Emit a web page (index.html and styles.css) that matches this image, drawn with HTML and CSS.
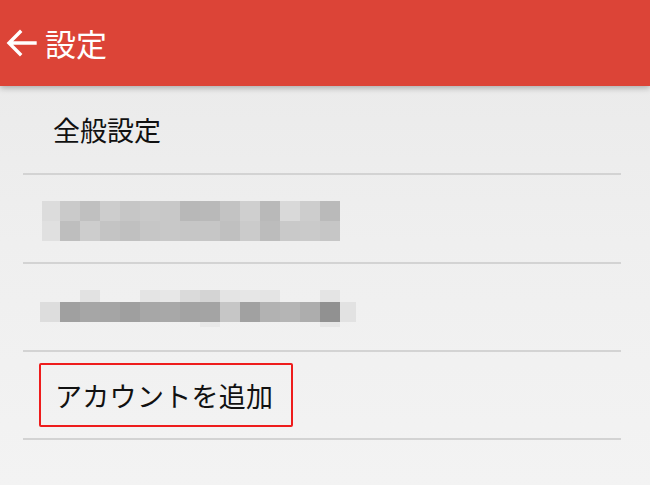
FILE: index.html
```html
<!DOCTYPE html>
<html lang="ja">
<head>
  <meta charset="UTF-8" />
  <title>設定</title>
  <link rel="stylesheet" href="styles.css">
</head>
<body>
  <header class="app-bar">
    <svg class="back" width="32" height="32" viewBox="0 0 32 32">
      <path d="M30 16 H5 M15 5 L4 16 L15 27" fill="none" stroke="#fff" stroke-width="3.4" stroke-linecap="square"/>
    </svg>
    <h1 class="title">設定</h1>
  </header>
  <ul class="settings">
    <li class="row row-tall"><span class="label">全般設定</span></li>
    <li class="row row-tall"><div class="mosaic mosaic-a"></div></li>
    <li class="row"><div class="mosaic mosaic-b"></div></li>
    <li class="row"><span class="add-account">アカウントを追加</span></li>
  </ul>
</body>
</html>
```

FILE: styles.css
```css
html, body {
  margin: 0;
  padding: 0;
}
body {
  width: 650px;
  height: 485px;
  overflow: hidden;
  background: linear-gradient(180deg, #e9e9e9 0%, #efefef 50%, #f3f3f3 100%);
  font-family: "Noto Sans CJK JP", "Noto Sans", sans-serif;
  color: #111;
}
.app-bar {
  position: relative;
  z-index: 1;
  height: 86px;
  background: #dc4437;
  display: flex;
  align-items: center;
  box-shadow: 0 2px 6px rgba(0,0,0,0.28);
}
.back {
  margin-left: 5px;
}
.title {
  margin: 0 0 2px 8px;
  color: #fff;
  font-size: 31px;
  font-weight: 400;
}
.settings {
  list-style: none;
  margin: 0 29px 0 23px;
  padding: 0;
}
.row {
  height: 86px;
  border-bottom: 2px solid #d3d3d3;
  display: flex;
  align-items: center;
}
.row-tall {
  height: 87px;
}
.label {
  padding-left: 30px;
  font-size: 27px;
}
.mosaic-a {
  margin-left: 19px;
  margin-top: 4px;
  width: 298px;
  height: 40px;
  background:
    linear-gradient(90deg, #dcdcdc 0 18px, #cacaca 18px 38px, #c0c0c0 38px 58px, #cdcdcd 58px 78px, #c6c6c6 78px 98px, #c9c9c9 98px 118px, #c8c8c8 118px 138px, #b8b8b8 138px 158px, #b9b9b9 158px 178px, #c3c3c3 178px 198px, #cfcfcf 198px 218px, #b9b9b9 218px 238px, #d9d9d9 238px 258px, #cdcdcd 258px 278px, #bababa 278px 298px) 0 0 / 298px 20px no-repeat,
    linear-gradient(90deg, #e0e0e0 0 18px, #bebebe 18px 38px, #cdcdcd 38px 58px, #c4c4c4 58px 78px, #c0c0c0 78px 98px, #c6c6c6 98px 118px, #c8c8c8 118px 138px, #c6c6c6 138px 158px, #c6c6c6 158px 178px, #c0c0c0 178px 198px, #cbcbcb 198px 218px, #bcbcbc 218px 238px, #c9c9c9 238px 258px, #cacaca 258px 278px, #c6c6c6 278px 298px) 0 20px / 298px 20px no-repeat;
}
.mosaic-b {
  margin-left: 17px;
  margin-top: 2px;
  width: 316px;
  height: 37px;
  background:
    linear-gradient(90deg, transparent 0 40px, #e2e2e2 40px 60px, transparent 60px 100px, #e4e4e4 100px 120px, #e7e7e7 120px 140px, #dadada 140px 160px, #d4d4d4 160px 180px, #e4e4e4 180px 200px, #e6e6e6 200px 220px, #e4e4e4 220px 240px, transparent 240px 280px, #e4e4e4 280px 300px, transparent 300px) 0 0 / 316px 12px no-repeat,
    linear-gradient(90deg, #dddddd 0 20px, #a0a0a0 20px 40px, #a6a6a6 40px 60px, #a5a5a5 60px 80px, #9f9f9f 80px 100px, #a7a7a7 100px 120px, #a8a8a8 120px 140px, #a3a3a3 140px 160px, #a4a4a4 160px 180px, #c6c6c6 180px 200px, #a1a1a1 200px 220px, #b2b2b2 220px 240px, #b5b5b5 240px 260px, #adadad 260px 280px, #919191 280px 300px, #e2e2e2 300px 316px) 0 12px / 316px 20px no-repeat,
    linear-gradient(90deg, transparent 0 160px, #e8e8e8 160px 180px, transparent 180px 280px, #e6e6e6 280px 300px, transparent 300px) 0 32px / 316px 5px no-repeat;
}
.add-account {
  margin-left: 16px;
  height: 60px;
  width: 236px;
  border: 2px solid #ee1c1c;
  border-radius: 2px;
  display: flex;
  align-items: center;
  padding-left: 14px;
  font-size: 27px;
  letter-spacing: 0.3px;
}
```
